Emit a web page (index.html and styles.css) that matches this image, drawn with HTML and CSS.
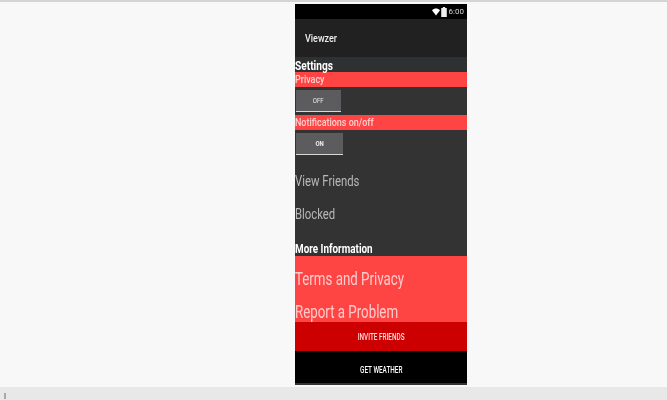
FILE: index.html
```html
<!DOCTYPE html>
<html lang="en">
<head>
    <meta charset="UTF-8">
    <title>Viewzer</title>
    <link rel="stylesheet" href="styles.css">
</head>
<body>
    <div class="top-strip"></div>
    <div class="stage">
        <div class="phone">
            <div class="status-bar">
                <svg class="wifi" width="8" height="8" viewBox="0 0 9 8"><path d="M0 2 C2.5 -0.6 6.5 -0.6 9 2 L4.5 8 Z" fill="#fff"/></svg>
                <svg class="battery" width="6" height="10" viewBox="0 0 5 9"><path d="M1.5 0 H3.5 V1 H5 V9 H0 V1 H1.5 Z" fill="#eee"/></svg>
                <span class="clock">6:00</span>
            </div>
            <div class="app-bar"><span class="squeeze">Viewzer</span></div>
            <div class="content">
                <div class="heading heading-settings"><span class="squeeze">Settings</span></div>
                <div class="red-label"><span class="squeeze">Privacy</span></div>
                <div class="toggle-row">
                    <button class="toggle toggle-off"><span class="squeeze-mid">OFF</span></button>
                </div>
                <div class="red-label"><span class="squeeze">Notifications on/off</span></div>
                <div class="toggle-row">
                    <button class="toggle toggle-on"><span class="squeeze-mid">ON</span></button>
                </div>
                <div class="link-item link-friends"><span class="squeeze">View Friends</span></div>
                <div class="link-item"><span class="squeeze">Blocked</span></div>
                <div class="heading heading-more"><span class="squeeze">More Information</span></div>
                <div class="red-block">
                    <div class="red-link"><span class="squeeze">Terms and Privacy</span></div>
                    <div class="red-link"><span class="squeeze">Report a Problem</span></div>
                </div>
                <button class="wide-btn invite-btn"><span class="squeeze-mid">INVITE FRIENDS</span></button>
                <button class="wide-btn weather-btn"><span class="squeeze-mid">GET WEATHER</span></button>
                <div class="phone-foot"></div>
            </div>
        </div>
    </div>
    <div class="bottom-bar"><span class="handle"></span></div>
</body>
</html>
```

FILE: styles.css
```css
html, body {
    margin: 0;
    height: 100%;
}
body {
    width: 667px;
    height: 400px;
    overflow: hidden;
    display: flex;
    flex-direction: column;
    background-color: #f8f8f8;
    font-family: Roboto, "Liberation Sans", sans-serif;
}
.top-strip {
    height: 2px;
    background-color: #d4d4d4;
}
.stage {
    height: 385px;
    padding: 2px 0 0 295px;
    box-sizing: border-box;
}
.phone {
    width: 172px;
    height: 381px;
    background-color: #333333;
    color: #ffffff;
    display: flex;
    flex-direction: column;
    filter: blur(0.4px);
}
/* the screenshot is a stretched video frame, text runs narrow and tall */
.squeeze {
    display: inline-block;
    white-space: nowrap;
    transform: scaleX(0.78);
    transform-origin: left center;
}
.squeeze-mid {
    display: inline-block;
    white-space: nowrap;
    transform: scaleX(0.75);
}
.status-bar {
    height: 15px;
    flex: none;
    background-color: #000000;
    display: flex;
    align-items: center;
    justify-content: flex-end;
    gap: 1px;
    padding-right: 3px;
    font-size: 8px;
    color: #d8d8d8;
}
.clock {
    margin-left: 1px;
}
.app-bar {
    height: 38px;
    flex: none;
    box-sizing: border-box;
    padding-left: 10px;
    background-color: #212121;
    font-size: 11.5px;
    font-weight: 500;
    line-height: 38px;
    color: #eeeeee;
}
.content {
    flex: 1;
    display: flex;
    flex-direction: column;
}
.heading {
    font-size: 13px;
    font-weight: 700;
    line-height: 15px;
    flex: none;
}
.heading-settings {
    height: 15px;
    line-height: 17px;
    background-color: #2e3032;
}
.heading-more {
    margin-top: 7px;
    height: 18px;
    line-height: 22px;
}
.heading-more .squeeze {
    transform: scaleX(0.76);
}
.red-label {
    height: 15px;
    flex: none;
    background-color: #ff4444;
    font-size: 11.5px;
    font-weight: 500;
    line-height: 15px;
    color: #ffd0d0;
}
.toggle-row {
    height: 28px;
    flex: none;
    padding: 3px 0 0 1px;
    box-sizing: border-box;
}
.toggle {
    display: block;
    height: 22px;
    padding: 0;
    border: none;
    border-bottom: 1px solid #d8d8d8;
    background-color: #5c5c5e;
    color: #eeeeee;
    font-family: inherit;
    font-size: 8px;
}
.toggle-off {
    width: 45px;
}
.toggle-on {
    width: 47px;
    font-weight: 700;
}
.link-item {
    height: 33px;
    flex: none;
    font-size: 15.5px;
    line-height: 33px;
    color: #b8b8b8;
}
.link-item .squeeze {
    transform: scaleX(0.73);
}
.link-friends {
    margin-top: 7px;
}
.red-block {
    height: 66px;
    flex: none;
    box-sizing: border-box;
    padding-top: 6px;
    background-color: #ff4444;
    overflow: hidden;
}
.red-link {
    height: 33px;
    font-size: 19px;
    line-height: 33px;
    color: #ffcccc;
}
.red-link .squeeze {
    transform: scaleX(0.7);
}
.wide-btn {
    display: block;
    width: 100%;
    flex: none;
    padding: 0;
    border: none;
    color: #ffffff;
    font-family: inherit;
    font-size: 8.5px;
    font-weight: 500;
}
.invite-btn {
    height: 29px;
    background-color: #cc0000;
    color: #ffdcdc;
}
.weather-btn {
    height: 32px;
    padding-top: 6px;
    background-color: #000000;
}
.phone-foot {
    flex: 1;
    background-color: #333333;
}
.bottom-bar {
    height: 13px;
    flex: none;
    background-color: #e8e8e8;
    padding: 6px 0 0 4px;
    box-sizing: border-box;
}
.handle {
    display: block;
    width: 2px;
    height: 6px;
    background-color: #a8a8a8;
}
```
